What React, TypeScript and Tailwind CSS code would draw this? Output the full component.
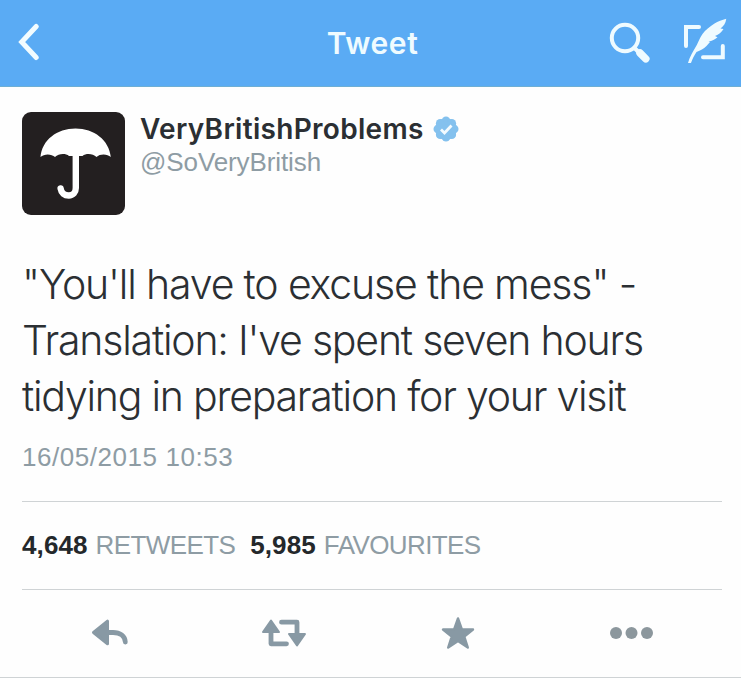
import type { ReactNode } from "react";

function BackIcon() {
  return (
    <svg width="24" height="40" viewBox="0 0 24 40" fill="none" stroke="#f2fcff" strokeWidth="5" strokeLinecap="round" strokeLinejoin="miter">
      <path d="M18.200 3.500 3.700 19 18.200 34.500" />
    </svg>
  );
}

function SearchIcon() {
  return (
    <svg width="42" height="42" viewBox="0 0 42 42" fill="none" stroke="#effbff" strokeLinecap="round">
      <circle cx="16" cy="16" r="13.200" strokeWidth="4" />
      <path d="M25.500 26 29 29.500" strokeWidth="4" />
      <path d="M31 31 36.800 36.800" strokeWidth="7.500" />
    </svg>
  );
}

function ComposeIcon() {
  return (
    <svg className="-mt-[5px]" width="45" height="46" viewBox="0 0 45 46" fill="none">
      <path d="M17 9H4V28M21 39.300H40.800V28" stroke="#effbff" strokeWidth="4" strokeLinecap="round" />
      <path
        d="M44.300 0.800C40 2.200 36 3.400 32.500 5.600 27.500 9 23.500 12 20.500 16 17.500 20 16.800 23.500 14.800 27 11.300 33 7.500 39 6 45H9C10.500 41 12 37.500 14.500 34 18.500 32.500 21.500 31 24.500 28L28 24 26.500 23.500C30 23 33 21.500 35.500 19.300L33 18C36.800 16.500 39.500 14.500 41.500 11L38.500 10.500C41.800 8 43.500 5.500 44.300 0.800Z"
        fill="#effbff"
      />
    </svg>
  );
}

function Umbrella() {
  return (
    <svg width="103" height="103" viewBox="0 0 103 103">
      <path
        d="M18.500 45C20 28 35 16.500 53.500 16.500S87 28 88.800 45C85.500 41.800 78 41.500 74.500 45 71 41.500 64 41 60.500 44H47C43.500 41 36.500 41.500 33 45 29.500 41.500 22 41.500 18.500 45Z"
        fill="#fff"
      />
      <path d="M53.800 40V76C53.800 80.500 51 83.500 46.800 83.500 42.500 83.500 39.300 81 38.600 76.500" fill="none" stroke="#fff" strokeWidth="6.400" strokeLinecap="round" />
    </svg>
  );
}

function VerifiedIcon() {
  return (
    <svg width="26" height="26" viewBox="0 0 26 26">
      <g fill="#84c1ee">
        <circle cx="13" cy="13" r="10.800" />
        <circle cx="13" cy="4.800" r="4.300" />
        <circle cx="18.800" cy="7.200" r="4.300" />
        <circle cx="21.200" cy="13" r="4.300" />
        <circle cx="18.800" cy="18.800" r="4.300" />
        <circle cx="13" cy="21.200" r="4.300" />
        <circle cx="7.200" cy="18.800" r="4.300" />
        <circle cx="4.800" cy="13" r="4.300" />
        <circle cx="7.200" cy="7.200" r="4.300" />
      </g>
      <path d="M8 13.500 11.500 17 18.500 9.500" fill="none" stroke="#f4fbff" strokeWidth="2.800" />
    </svg>
  );
}

function ReplyIcon() {
  return (
    <svg width="38" height="28" viewBox="0 0 38 28">
      <path d="M2.500 13.500 16.500 2.200V24.800Z" fill="#8899a4" stroke="#8899a4" strokeWidth="3" strokeLinejoin="round" />
      <path d="M17 13.500H22C29 13.500 34 17 34.300 23" fill="none" stroke="#8899a4" strokeWidth="4.800" strokeLinecap="round" />
    </svg>
  );
}

function RetweetIcon() {
  return (
    <svg width="46" height="28" viewBox="0 0 46 28">
      <g fill="#8899a4" stroke="#8899a4" strokeWidth="2" strokeLinejoin="round">
        <path d="M10 1.500 18 13H2Z" />
        <path d="M36 26.500 44 15H28Z" />
      </g>
      <path d="M10 12V24.800H25.500M20.500 3.200H36V16" fill="none" stroke="#8899a4" strokeWidth="4.800" strokeLinecap="round" strokeLinejoin="round" />
    </svg>
  );
}

function StarIcon() {
  return (
    <svg width="34" height="34" viewBox="0 0 34 34">
      <path
        d="M17 2.500 20.800 13.200 32 13.500 23.300 20.500 26.800 31.500 17 25 7.200 31.500 10.700 20.500 2 13.500 13.200 13.200Z"
        fill="#8899a4"
        stroke="#8899a4"
        strokeWidth="2.400"
        strokeLinejoin="round"
      />
    </svg>
  );
}

function MoreIcon() {
  return (
    <svg width="44" height="12" viewBox="0 0 44 12" fill="#8c979d">
      <circle cx="6" cy="6" r="6" />
      <circle cx="21.500" cy="6" r="6" />
      <circle cx="37" cy="6" r="6" />
    </svg>
  );
}

function Count({ value, children }: { value: string; children: ReactNode }) {
  return (
    <span className="flex gap-[8px]">
      <b className="font-bold tracking-[0.1px] text-[#24282b]">{value}</b>
      <span className="text-[#8e9ca4]">{children}</span>
    </span>
  );
}

export default function App() {
  return (
    <div className="flex h-[678px] w-[741px] flex-col overflow-hidden bg-[#fefefe] font-[Inter,'Liberation_Sans',sans-serif] whitespace-nowrap">
      <header className="grid h-[87px] shrink-0 grid-cols-[1fr_auto_1fr] items-center border-b border-[#6eafd4] bg-[#5aabf4] pr-[14px] pl-[18px]">
        <button aria-label="Back" className="w-6">
          <BackIcon />
        </button>
        <h1 className="text-[30px] font-semibold tracking-[0.6px] text-[#effbff]">Tweet</h1>
        <div className="flex items-center justify-end gap-[31px]">
          <SearchIcon />
          <ComposeIcon />
        </div>
      </header>

      <main className="flex flex-col pt-[25px] pr-[19px] pl-[22px]">
        <div className="flex h-[103px] gap-[15px]">
          <div className="size-[103px] shrink-0 rounded-[9px] bg-[#231f20]">
            <Umbrella />
          </div>
          <div className="flex flex-col">
            <div className="flex h-[34px] items-center gap-[9px]">
              <span className="text-[28px] leading-[34px] font-semibold tracking-[0.3px] text-[#2b2f33]">VeryBritishProblems</span>
              <VerifiedIcon />
            </div>
            <span className="font-['Liberation_Sans',sans-serif] text-[26px] leading-[33px] tracking-[-0.1px] text-[#8e9ca4]">@SoVeryBritish</span>
          </div>
        </div>

        <p className="mt-[41px] flex flex-col text-[41px] leading-[56px] font-light text-[#2b2f33]">
          <span className="tracking-[-1.15px]">"You'll have to excuse the mess" -</span>
          <span className="tracking-[-1.21px]">Translation: I've spent seven hours</span>
          <span className="tracking-[-1.24px]">tidying in preparation for your visit</span>
        </p>
        <time className="mt-[17px] font-['Liberation_Sans',sans-serif] text-[26px] leading-[32px] tracking-[0.55px] text-[#8e9ca4]">16/05/2015 10:53</time>

        <div className="mt-[28px] flex h-[89px] items-center gap-[15px] border-y border-[#cfd3d5] font-['Liberation_Sans',sans-serif] text-[26px] tracking-[-0.6px]">
          <Count value="4,648">RETWEETS</Count>
          <Count value="5,985">FAVOURITES</Count>
        </div>
      </main>

      <footer className="flex h-[88px] items-center border-b border-[#cfd3d5] pb-[2px] pl-[91px]">
        <span className="w-[170px]">
          <ReplyIcon />
        </span>
        <span className="w-[180px]">
          <RetweetIcon />
        </span>
        <span className="w-[169px]">
          <StarIcon />
        </span>
        <MoreIcon />
      </footer>
    </div>
  );
}
